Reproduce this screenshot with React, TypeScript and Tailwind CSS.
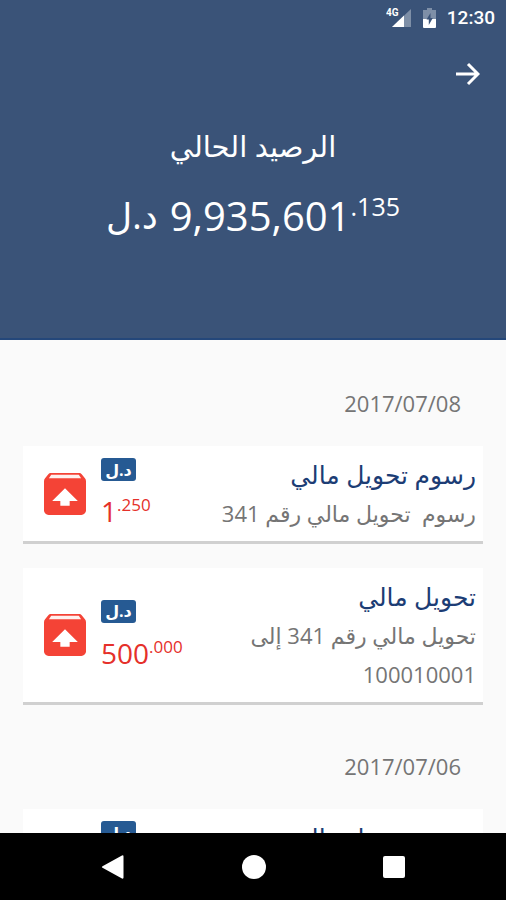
import React from 'react';

interface Transaction {
  title: string;
  details: string;
  whole: string;
  fraction: string;
}

interface Day {
  date: string;
  transactions: Transaction[];
}

const days: Day[] = [
  {
    date: '2017/07/08',
    transactions: [
      { title: 'رسوم تحويل مالي', details: 'رسوم \u00a0تحويل مالي رقم 341', whole: '1', fraction: '.250' },
      { title: 'تحويل مالي', details: 'تحويل مالي رقم 341 إلى 100010001', whole: '500', fraction: '.000' },
    ],
  },
  {
    date: '2017/07/06',
    transactions: [
      { title: 'رسوم تحويل مالي', details: 'رسوم \u00a0تحويل مالي رقم 340', whole: '1', fraction: '.250' },
    ],
  },
];

const StatusBar: React.FC = () => (
  <div dir="ltr" className="flex h-9 items-center justify-end pr-[11px] text-white">
    <svg width="26" height="22" viewBox="0 0 26 22" className="mr-[11px]" aria-hidden="true">
      <path d="M25 2v18H6z" fill="#fff" opacity=".35" />
      <path d="M18 8.6V20H6z" fill="#fff" />
      <text x="0" y="9" fontSize="10" fontWeight="700" fill="#fff" fontFamily="Roboto, sans-serif">
        4G
      </text>
    </svg>
    <svg width="13" height="20" viewBox="0 0 13 20" className="mr-[11px]" aria-hidden="true">
      <path d="M4 0h5v2h4v9H0V2h4z" fill="#fff" opacity=".35" />
      <path d="M0 11h13v8a1 1 0 0 1-1 1H1a1 1 0 0 1-1-1z" fill="#fff" />
      <path d="M7.5 5 3.5 11.5h2.3V17l4-7H7.5z" fill="#3a5378" />
    </svg>
    <span className="font-[Roboto,sans-serif] text-[19px] font-medium">12:30</span>
  </div>
);

const UploadIcon: React.FC = () => (
  <svg width="42" height="42" viewBox="3 3 18 18" className="shrink-0" aria-hidden="true">
    <path
      d="M20.55 5.22l-1.39-1.68C18.88 3.21 18.47 3 18 3H6c-.47 0-.88.21-1.15.55L3.46 5.22C3.17 5.57 3 6.01 3 6.5V19c0 1.1.89 2 2 2h14c1.1 0 2-.9 2-2V6.5c0-.49-.17-.93-.45-1.28z"
      fill="#f44336"
    />
    <path d="M5.1 5.3 6.1 3.8h11.8l1 1.5z" fill="#fff0ee" />
    <path d="M12 9.5l5.5 5.5H14v2h-4v-2H6.500z" fill="#fff" />
  </svg>
);

const TransactionCard: React.FC<Transaction> = ({ title, details, whole, fraction }) => (
  <li className="flex items-center justify-between border-b-3 border-[#d0d0d0] bg-white py-2 pr-[7px] pl-[21px]">
    <div className="w-[264px]">
      <h2 className="text-[25px] leading-10 text-[#1c3d75]">{title}</h2>
      <p className="text-[22px] leading-[39px] text-[#757575]">{details}</p>
    </div>
    <div dir="ltr" className="flex items-center gap-[15px]">
      <UploadIcon />
      <div className="w-21">
        <span className="flex h-[23px] w-[35px] items-center justify-center rounded-[3px] bg-[#265a93] text-base font-bold text-white">
          د.ل
        </span>
        <p className="mt-3 flex leading-9 text-[#e5302a]">
          <span className="text-[28px]">{whole}</span>
          <span className="-mt-1.5 text-[17px]">{fraction}</span>
        </p>
      </div>
    </div>
  </li>
);

const App: React.FC = () => {
  return (
    <div
      dir="rtl"
      lang="ar"
      className="flex h-screen flex-col bg-[#fafafa] font-['Open_Sans','DejaVu_Sans',sans-serif]"
    >
      <header className="h-[340px] shrink-0 border-b-2 border-[#24477a] bg-[#3a5378] text-white">
        <StatusBar />
        <div className="flex h-19 items-center px-[26px]">
          <button type="button" aria-label="رجوع">
            <svg width="24" height="24" viewBox="0 0 24 24" fill="none" stroke="#fff" strokeWidth="3" aria-hidden="true">
              <path d="M0 12h22M12 2l10 10-10 10" />
            </svg>
          </button>
        </div>
        <div className="text-center">
          <h1 className="text-[29px] leading-[68px]">الرصيد الحالي</h1>
          <p className="flex justify-center gap-3 text-[40px] leading-[72px]">
            <bdi dir="ltr" className="flex">
              9,935,601
              <span className="-mt-2.5 text-[25px] leading-[72px]">.135</span>
            </bdi>
            <span className="text-4xl leading-[72px]">د.ل</span>
          </p>
        </div>
      </header>

      <main className="min-h-0 flex-1 overflow-hidden px-[23px] pt-0.5">
        {days.map((day) => (
          <section key={day.date}>
            <time className="block pt-[49px] pr-[22px] pb-[31px] text-[22px] leading-6 text-[#757575]">{day.date}</time>
            <ul className="flex flex-col gap-6">
              {day.transactions.map((transaction) => (
                <TransactionCard key={transaction.title} {...transaction} />
              ))}
            </ul>
          </section>
        ))}
      </main>

      <nav dir="ltr" className="flex h-[67px] shrink-0 items-center justify-center gap-[117px] bg-black">
        <button type="button" aria-label="Back">
          <svg width="24" height="24" viewBox="0 0 24 24" fill="#fff" aria-hidden="true">
            <path d="M1.5 11.2 21 .4q1.5-.6 1.5 1v21.2q0 1.600-1.5 1L1.5 12.8q-1.200-.8 0-1.600z" />
          </svg>
        </button>
        <button type="button" aria-label="Home" className="size-6 rounded-full bg-white" />
        <button type="button" aria-label="Recent apps" className="size-[22px] rounded-[2px] bg-white" />
      </nav>
    </div>
  );
};

export default App;
